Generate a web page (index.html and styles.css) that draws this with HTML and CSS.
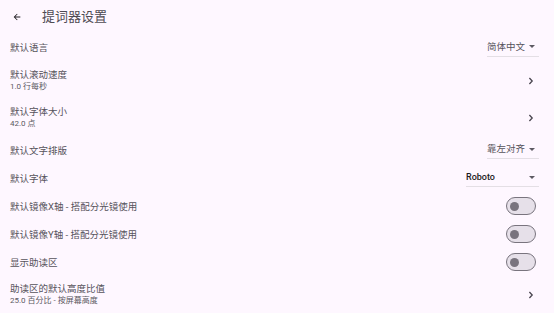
FILE: index.html
```html
<!DOCTYPE html>
<html lang="zh-CN">
<head>
    <meta charset="UTF-8">
    <meta name="viewport" content="width=device-width, initial-scale=1.0">
    <title>提词器设置</title>
    <link rel="stylesheet" href="styles.css">
</head>
<body>
    <header class="app-bar">
        <svg class="back" width="10" height="10" viewBox="0 0 24 24">
            <path d="M20 11H7.83l5.59-5.59L12 4l-8 8 8 8 1.41-1.41L7.83 13H20v-2z" fill="#1D1B20"/>
        </svg>
        <h1 class="title">提词器设置</h1>
    </header>

    <div class="tile tile-drop tile-first">
        <span class="tile-title">默认语言</span>
        <div class="dropdown">
            <span class="dd-text">简体中文</span>
            <span class="dd-arrow"></span>
        </div>
    </div>

    <div class="tile tile-two">
        <div class="tile-text">
            <span class="tile-title">默认滚动速度</span>
            <span class="tile-sub">1.0 行每秒</span>
        </div>
        <svg class="chevron" width="6" height="8" viewBox="0 0 6 8">
            <path d="M1.4 1 L4.2 4 L1.4 7" stroke="#49454F" stroke-width="1.3" fill="none"/>
        </svg>
    </div>

    <div class="tile tile-two">
        <div class="tile-text">
            <span class="tile-title">默认字体大小</span>
            <span class="tile-sub">42.0 点</span>
        </div>
        <svg class="chevron" width="6" height="8" viewBox="0 0 6 8">
            <path d="M1.4 1 L4.2 4 L1.4 7" stroke="#49454F" stroke-width="1.3" fill="none"/>
        </svg>
    </div>

    <div class="tile tile-one">
        <span class="tile-title">默认文字排版</span>
        <div class="dropdown">
            <span class="dd-text">靠左对齐</span>
            <span class="dd-arrow"></span>
        </div>
    </div>

    <div class="tile tile-one">
        <span class="tile-title">默认字体</span>
        <div class="dropdown dropdown-wide">
            <span class="dd-text dd-dark">Roboto</span>
            <span class="dd-arrow"></span>
        </div>
    </div>

    <div class="tile tile-one">
        <span class="tile-title">默认镜像X轴 - 搭配分光镜使用</span>
        <div class="switch"><span class="thumb"></span></div>
    </div>

    <div class="tile tile-one">
        <span class="tile-title">默认镜像Y轴 - 搭配分光镜使用</span>
        <div class="switch"><span class="thumb"></span></div>
    </div>

    <div class="tile tile-one">
        <span class="tile-title">显示助读区</span>
        <div class="switch"><span class="thumb"></span></div>
    </div>

    <div class="tile tile-two">
        <div class="tile-text">
            <span class="tile-title">助读区的默认高度比值</span>
            <span class="tile-sub">25.0 百分比 - 按屏幕高度</span>
        </div>
        <svg class="chevron" width="6" height="8" viewBox="0 0 6 8">
            <path d="M1.4 1 L4.2 4 L1.4 7" stroke="#49454F" stroke-width="1.3" fill="none"/>
        </svg>
    </div>
</body>
</html>
```

FILE: styles.css
```css
body {
    margin: 0;
    background-color: #FEF7FF;
    font-family: Roboto, "Noto Sans CJK SC", sans-serif;
    color: #1D1B20;
}
.app-bar {
    height: 33px;
    display: flex;
    align-items: center;
    padding-left: 12px;
}
.back { display: block; }
.title {
    margin: 0 0 0 20px;
    font-size: 13px;
    font-weight: 400;
    color: #4E4B53;
    line-height: 16px;
}
.tile {
    display: flex;
    align-items: center;
    justify-content: space-between;
    padding: 0 15px 0 10px;
}
.tile-first { height: 29px; }
.tile-one { height: 28px; }
.tile-two { height: 37px; }
.tile-text { display: flex; flex-direction: column; }
.tile-title {
    font-size: 9.5px;
    line-height: 13px;
    color: #56535B;
}
.tile-sub {
    font-size: 8px;
    line-height: 12px;
    color: #5C5962;
}
.chevron { display: block; margin-right: 5px; }
.dropdown {
    width: 52px;
    display: flex;
    align-items: center;
    padding-top: 2px;
    padding-bottom: 3px;
    border-bottom: 1.5px solid #E4DFE5;
}
.dropdown-wide { width: 73px; }
.dd-text {
    flex: 1;
    font-size: 9.5px;
    line-height: 12px;
    color: #56535B;
}
.dd-dark { color: #1D1B20; font-weight: 500; font-size: 9px; }
.dd-arrow {
    width: 0;
    height: 0;
    margin-right: 4px;
    border-left: 3px solid transparent;
    border-right: 3px solid transparent;
    border-top: 3px solid #5C5962;
}
.switch {
    box-sizing: border-box;
    width: 30px;
    height: 18px;
    margin-right: 3px;
    display: flex;
    align-items: center;
    padding-left: 3px;
    border: 1.5px solid #79747E;
    border-radius: 9px;
    background-color: #E6E0E9;
}
.thumb {
    width: 9px;
    height: 9px;
    border-radius: 50%;
    background-color: #79747E;
}
```
